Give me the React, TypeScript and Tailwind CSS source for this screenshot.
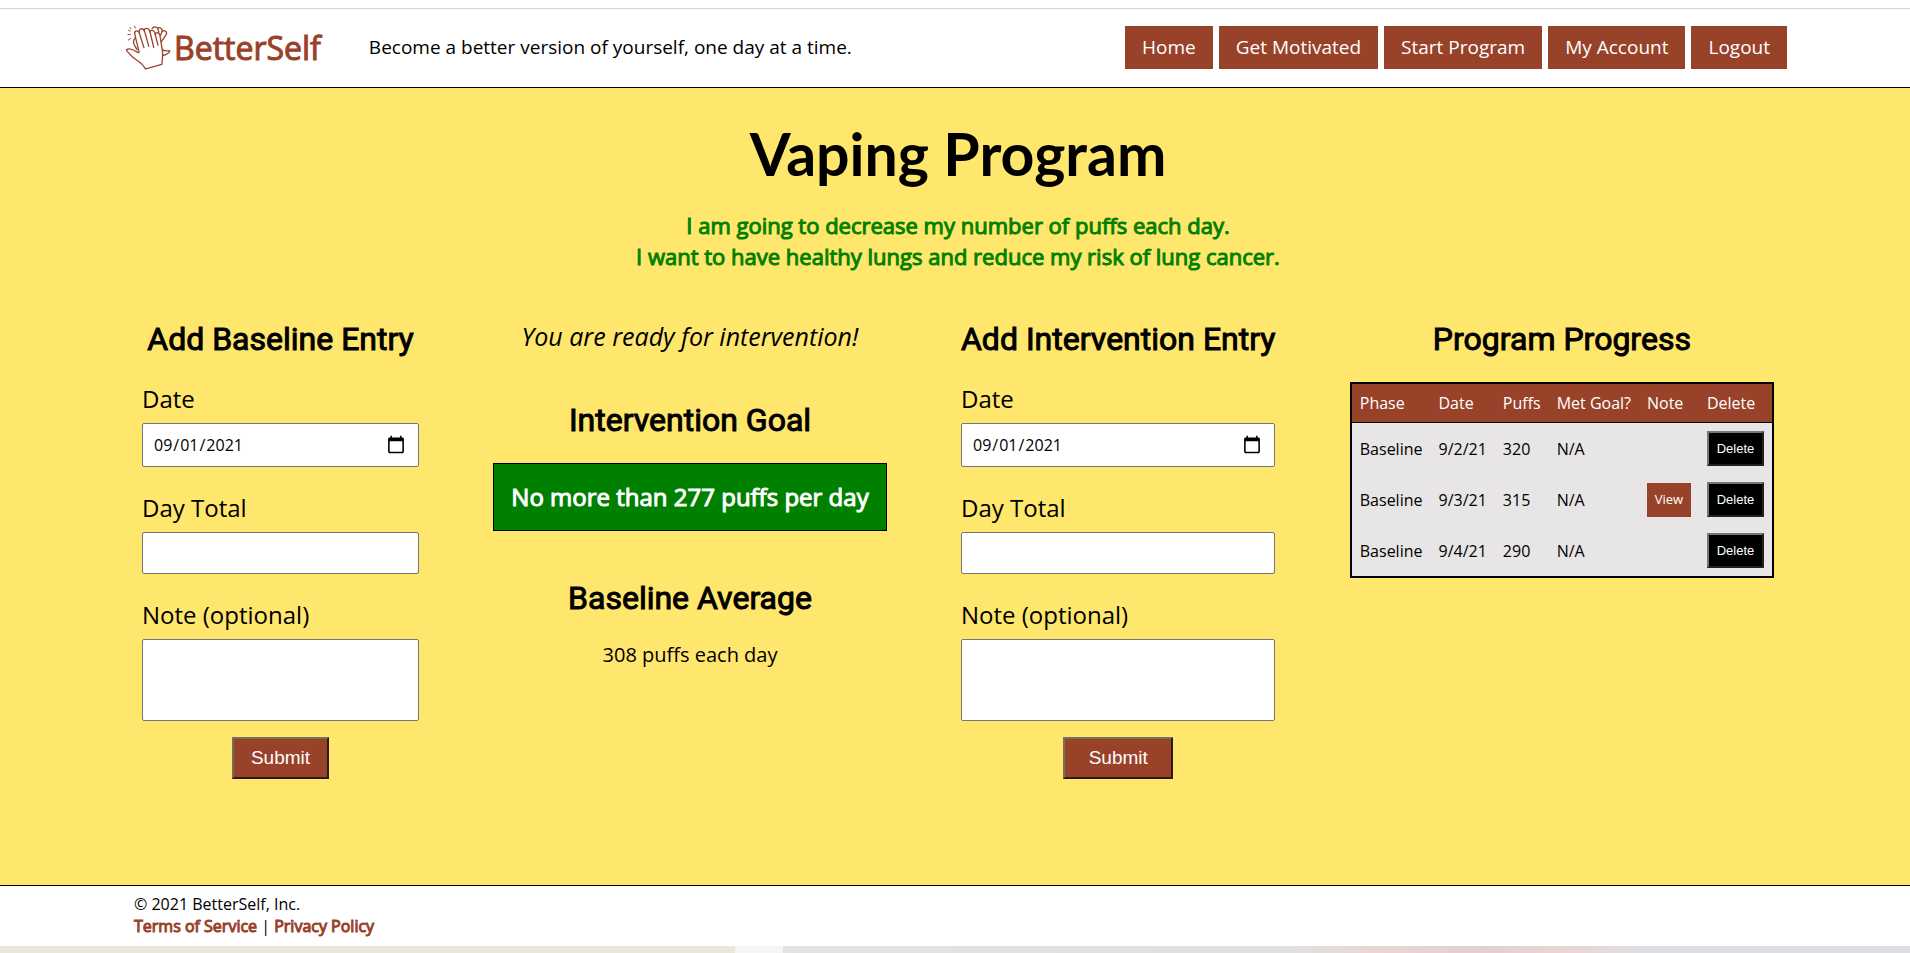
import type { ReactNode } from "react";

type Entry = { phase: string; date: string; puffs: number; met: string; note: boolean };

const NAV = ["Home", "Get Motivated", "Start Program", "My Account", "Logout"];

const COLUMNS = ["Phase", "Date", "Puffs", "Met Goal?", "Note", "Delete"];

const ENTRIES: Entry[] = [
  { phase: "Baseline", date: "9/2/21", puffs: 320, met: "N/A", note: false },
  { phase: "Baseline", date: "9/3/21", puffs: 315, met: "N/A", note: true },
  { phase: "Baseline", date: "9/4/21", puffs: 290, met: "N/A", note: false },
];

function HandsLogo() {
  return (
    <svg
      viewBox="45 70 141 143"
      className="h-[47px] w-[46px] shrink-0"
      fill="none"
      stroke="#99422a"
      strokeWidth="4"
      strokeLinecap="round"
      strokeLinejoin="round"
      aria-hidden="true"
    >
      <path d="M108 207 C100 196 96 190 88 185 C76 178 66 170 58 160 C52 153 47 150 51 147 C59 143 70 148 78 153 C84 157 89 159 88 154 L75 101 C73 89 85 87 89 97 L103 142" />
      <path d="M89 97 C86 82 101 80 105 92 L118 138" />
      <path d="M104 91 C103 80 117 80 121 91 L133 141" />
      <path d="M121 94 C123 86 134 88 137 98 L146 134" />
      <path d="M137 101 C141 93 150 96 152 104 L159 148 C162 160 160 176 158 193 L108 207" />
      <path d="M128 84 C132 76 142 76 146 85 L149 95" />
      <path d="M145 84 C151 77 161 83 158 94 L154 104" />
      <path d="M159 92 C166 87 176 93 171 102 L156 124" />
      <path d="M160 147 C166 155 173 152 179 151 C184 152 182 156 177 159 C172 163 168 166 161 166" />
      <path d="M76 112 C70 120 70 130 76 138 L82 148" />
      <path d="M60 80 L63 84 M74 76 L77 82 M56 89 L61 91 M54 102 L61 102 M55 119 L62 114" strokeWidth="3" />
    </svg>
  );
}

function Heading({ children }: { children: ReactNode }) {
  return (
    <h2 className="text-center font-['Roboto',sans-serif] text-[32px] leading-10 whitespace-nowrap [-webkit-text-stroke:1px_currentColor]">
      {children}
    </h2>
  );
}

function EntryForm({ id, title }: { id: string; title: string }) {
  const box = "block w-full rounded-[2px] border border-[#767676] bg-white px-[10px] text-base";
  const label = "mb-2 block text-2xl leading-8";
  return (
    <form className="flex min-w-[277px] flex-col" onSubmit={(e) => e.preventDefault()}>
      <Heading>{title}</Heading>
      <div className="mt-6 flex flex-col gap-[25px]">
        <div>
          <label htmlFor={`${id}-date`} className={label}>Date</label>
          <input
            id={`${id}-date`}
            type="date"
            defaultValue="2021-09-01"
            className={`${box} h-11 [&::-webkit-calendar-picker-indicator]:h-5 [&::-webkit-calendar-picker-indicator]:w-5`}
          />
        </div>
        <div>
          <label htmlFor={`${id}-total`} className={label}>Day Total</label>
          <input id={`${id}-total`} type="text" className={`${box} h-[42px]`} />
        </div>
        <div>
          <label htmlFor={`${id}-note`} className={label}>Note (optional)</label>
          <textarea id={`${id}-note`} className={`${box} h-[82px] resize-none`} />
        </div>
      </div>
      <button
        type="submit"
        className="mt-4 h-[42px] w-[35%] self-center border-2 border-t-[#767059] border-r-[#2b1a10] border-b-[#2b1a10] border-l-[#767059] bg-[#99422a] font-['Liberation_Sans',Arial,sans-serif] text-[19px] text-white"
      >
        Submit
      </button>
    </form>
  );
}

function ProgressTable() {
  return (
    <table className="mt-[23px] border-collapse border-2 border-black bg-[#e7e5e5] text-base">
      <thead className="border-b border-black bg-[#99422a] text-white">
        <tr>
          {COLUMNS.map((c) => (
            <th key={c} scope="col" className="p-2 text-left leading-[22px] font-normal whitespace-nowrap">{c}</th>
          ))}
        </tr>
      </thead>
      <tbody>
        {ENTRIES.map((e) => (
          <tr key={e.date}>
            <td className="p-2">{e.phase}</td>
            <td className="p-2">{e.date}</td>
            <td className="p-2">{e.puffs}</td>
            <td className="p-2">{e.met}</td>
            <td className="p-2">
              {e.note && (
                <a href="#note" className="flex h-[34px] w-11 items-center justify-center bg-[#99422a] text-[13px] text-white">View</a>
              )}
            </td>
            <td className="p-2">
              <button
                type="button"
                className="block h-[35px] w-[57px] border-2 border-t-[#767676] border-r-[#212121] border-b-[#212121] border-l-[#767676] bg-black font-['Liberation_Sans',Arial,sans-serif] text-[13px] text-white"
              >
                Delete
              </button>
            </td>
          </tr>
        ))}
      </tbody>
    </table>
  );
}

export default function App() {
  return (
    <div className="flex min-h-screen flex-col bg-white font-['Open_Sans',sans-serif] text-black">
      <header className="mt-2 flex min-h-20 items-center border-t border-b border-t-[#d5d5d5] border-b-black pr-[123px] pb-px pl-[125px]">
        <a href="#home" className="flex items-center gap-[3px] text-[#99422a]">
          <HandsLogo />
          <span className="text-[32px] leading-10 [-webkit-text-stroke:1px_currentColor]">BetterSelf</span>
        </a>
        <p className="ml-12 text-[19px]">Become a better version of yourself, one day at a time.</p>
        <nav className="ml-auto flex gap-[6px]">
          {NAV.map((n) => (
            <a key={n} href="#nav" className="flex h-[43px] items-center bg-[#99422a] px-[17px] text-[19px] text-white">{n}</a>
          ))}
        </nav>
      </header>

      <main className="flex-1 bg-[#ffe66d] pt-[30px] pr-[136px] pb-10 pl-[142px]">
        <h1 className="text-center font-['Lato',sans-serif] text-[59px] leading-[72px] font-bold">Vaping Program</h1>
        <p className="mt-5 text-center text-[22px] leading-[31px] text-[#008000] [-webkit-text-stroke:1px_currentColor]">
          I am going to decrease my number of puffs each day.
          <br />
          I want to have healthy lungs and reduce my risk of lung cancer.
        </p>

        <div className="mt-[47px] flex items-start justify-between">
          <EntryForm id="baseline" title="Add Baseline Entry" />

          <section className="flex flex-col text-center">
            <p className="text-[25px] leading-[34px] italic">You are ready for intervention!</p>
            <div className="mt-[47px]">
              <Heading>Intervention Goal</Heading>
            </div>
            <p className="mt-[23px] border border-black bg-[#008000] p-[17px] text-2xl leading-8 text-white [-webkit-text-stroke:1px_currentColor]">
              No more than 277 puffs per day
            </p>
            <div className="mt-[47px]">
              <Heading>Baseline Average</Heading>
            </div>
            <p className="mt-[23px] text-xl leading-7">308 puffs each day</p>
          </section>

          <EntryForm id="intervention" title="Add Intervention Entry" />

          <section>
            <Heading>Program Progress</Heading>
            <ProgressTable />
          </section>
        </div>
      </main>

      <footer className="border-t border-black pt-[7px] pb-[9px] pl-[134px] text-base leading-[22px]">
        <p>© 2021 BetterSelf, Inc.</p>
        <p>
          <a href="#terms" className="text-[#99422a] [-webkit-text-stroke:1px_currentColor]">Terms of Service</a>
          {" | "}
          <a href="#privacy" className="text-[#99422a] [-webkit-text-stroke:1px_currentColor]">Privacy Policy</a>
        </p>
      </footer>
      <div className="flex h-[7px]">
        <div className="w-[38.5%] bg-[#e9e7da]" />
        <div className="w-[2.5%] bg-[#f5f5f5]" />
        <div className="flex-1 bg-[linear-gradient(to_right,#e3e3e1_0%,#dfe1df_45%,#ead6d5_52%,#e3cfcf_62%,#ead6d5_70%,#dcdee2_76%,#dcdee2_100%)]" />
      </div>
    </div>
  );
}
